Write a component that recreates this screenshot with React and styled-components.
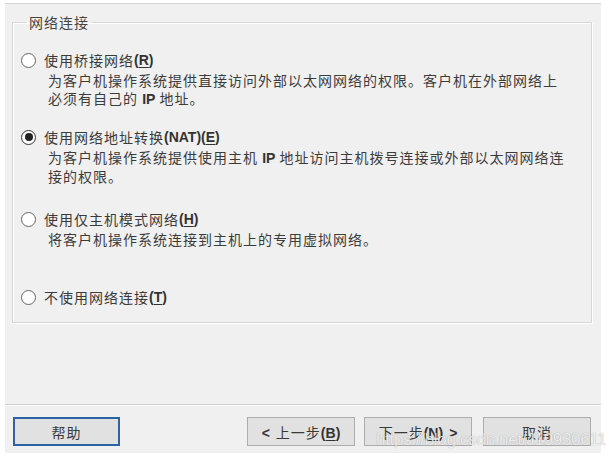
import React from 'react';
import styled, { createGlobalStyle } from 'styled-components';

const GlobalStyle = createGlobalStyle`
  body {
    margin: 0;
    background: #ffffff;
    font-family: "Noto Sans CJK SC", "Liberation Sans", sans-serif;
  }
`;

const Window = styled.div`
  position: relative;
  box-sizing: border-box;
  width: 596px;
  height: 450px;
  margin: 3px 0 0 5px;
  background: #f0f0f0;
  border-top: 1px solid #d4d4d4;
  display: flex;
  flex-direction: column;
  color: #3a3a3a;
  font-size: 14px;
  letter-spacing: 1px;
`;

const Group = styled.fieldset`
  margin: 9px 9px 0 7px;
  padding: 19px 10px 15px 8px;
  border: 1px solid #d6d6d6;
  box-shadow: inset 1px 1px 0 #ffffff, 1px 1px 0 #ffffff;
  min-width: 0;
`;

const Legend = styled.legend`
  margin-left: 5px;
  padding: 0 3px 0 3px;
  font-size: 14px;
  line-height: 18px;
  color: #444;
`;

const Option = styled.div`
  display: flex;
  flex-direction: column;
  margin-top: ${props => props.$gap || 0}px;
`;

const RadioRow = styled.label`
  display: flex;
  align-items: center;
  height: 20px;
  line-height: 20px;
  white-space: nowrap;
`;

const Radio = styled.span`
  box-sizing: border-box;
  width: 15px;
  height: 15px;
  margin-right: 8px;
  border-radius: 50%;
  border: 1px solid ${props => props.$checked ? '#333' : '#666'};
  background: #ffffff;
  display: flex;
  align-items: center;
  justify-content: center;
  flex-shrink: 0;
  &::after {
    content: '';
    display: ${props => props.$checked ? 'block' : 'none'};
    width: 8px;
    height: 8px;
    border-radius: 50%;
    background: #222;
  }
`;

const Description = styled.div`
  margin: 1px 0 0 27px;
  line-height: 18px;
  color: #3c3c3c;
`;

const Line = styled.div`
  white-space: nowrap;
`;

const Latin = styled.span`
  font-family: "Liberation Sans", Arial, sans-serif;
  font-weight: bold;
  letter-spacing: 0;
  color: #333;
`;

const Arrow = styled(Latin)`
  margin: ${props => props.$after ? '0 0 0 6px' : '0 6px 0 0'};
`;

const Key = styled.u`
  text-underline-offset: 2px;
`;

const Spacer = styled.div`
  flex: 1;
`;

const Footer = styled.div`
  border-top: 1px solid #cfcfcf;
  box-shadow: inset 0 1px 0 #ffffff;
  padding: 12px 10px 7px 8px;
  display: flex;
  justify-content: space-between;
  align-items: center;
`;

const NavGroup = styled.div`
  display: flex;
  gap: 9px;
`;

const Button = styled.button`
  box-sizing: border-box;
  width: ${props => props.$width || 108}px;
  height: 29px;
  margin-left: ${props => props.$offset || 0}px;
  background: #e1e1e1;
  border: ${props => props.$focused ? '2px solid #2b64a4' : '1px solid #adadad'};
  font-family: "Noto Sans CJK SC", "Liberation Sans", sans-serif;
  font-size: 14px;
  letter-spacing: 1px;
  color: #3a3a3a;
  padding: 0;
  white-space: nowrap;
  text-align: center;
`;

const Watermark = styled.div`
  position: absolute;
  left: 371px;
  top: 426px;
  font-family: "Liberation Sans", Arial, sans-serif;
  font-size: 17px;
  letter-spacing: -0.3px;
  color: rgba(255, 255, 255, 0.8);
  text-shadow: 0 0 1px rgba(0, 0, 0, 0.35);
  white-space: nowrap;
  pointer-events: none;
`;

const options = [
  {
    label: <>使用桥接网络<Latin>(<Key>R</Key>)</Latin></>,
    lines: [
      '为客户机操作系统提供直接访问外部以太网网络的权限。客户机在外部网络上',
      <>必须有自己的 <Latin>IP</Latin> 地址。</>,
    ],
    gap: 0,
  },
  {
    label: <>使用网络地址转换<Latin>(NAT)(<Key>E</Key>)</Latin></>,
    lines: [
      <>为客户机操作系统提供使用主机 <Latin>IP</Latin> 地址访问主机拨号连接或外部以太网网络连</>,
      '接的权限。',
    ],
    gap: 19,
    checked: true,
  },
  {
    label: <>使用仅主机模式网络<Latin>(<Key>H</Key>)</Latin></>,
    lines: ['将客户机操作系统连接到主机上的专用虚拟网络。'],
    gap: 24,
  },
  {
    label: <>不使用网络连接<Latin>(<Key>T</Key>)</Latin></>,
    lines: [],
    gap: 39,
  },
];

const App = () => (
  <>
    <GlobalStyle />
    <Window>
      <Group>
        <Legend>网络连接</Legend>
        {options.map((opt, i) => (
          <Option key={i} $gap={opt.gap}>
            <RadioRow>
              <Radio $checked={opt.checked} />
              {opt.label}
            </RadioRow>
            {opt.lines.length > 0 && (
              <Description>
                {opt.lines.map((line, j) => (
                  <Line key={j}>{line}</Line>
                ))}
              </Description>
            )}
          </Option>
        ))}
      </Group>
      <Spacer />
      <Footer>
        <Button $focused $width={107}>帮助</Button>
        <NavGroup>
          <Button><Arrow>&lt;</Arrow>上一步<Latin>(<Key>B</Key>)</Latin></Button>
          <Button>下一步<Latin>(<Key>N</Key>)</Latin><Arrow $after>&gt;</Arrow></Button>
          <Button $offset={2}>取消</Button>
        </NavGroup>
      </Footer>
      <Watermark>https://blog.csdn.net/J19930611</Watermark>
    </Window>
  </>
);

export default App;
